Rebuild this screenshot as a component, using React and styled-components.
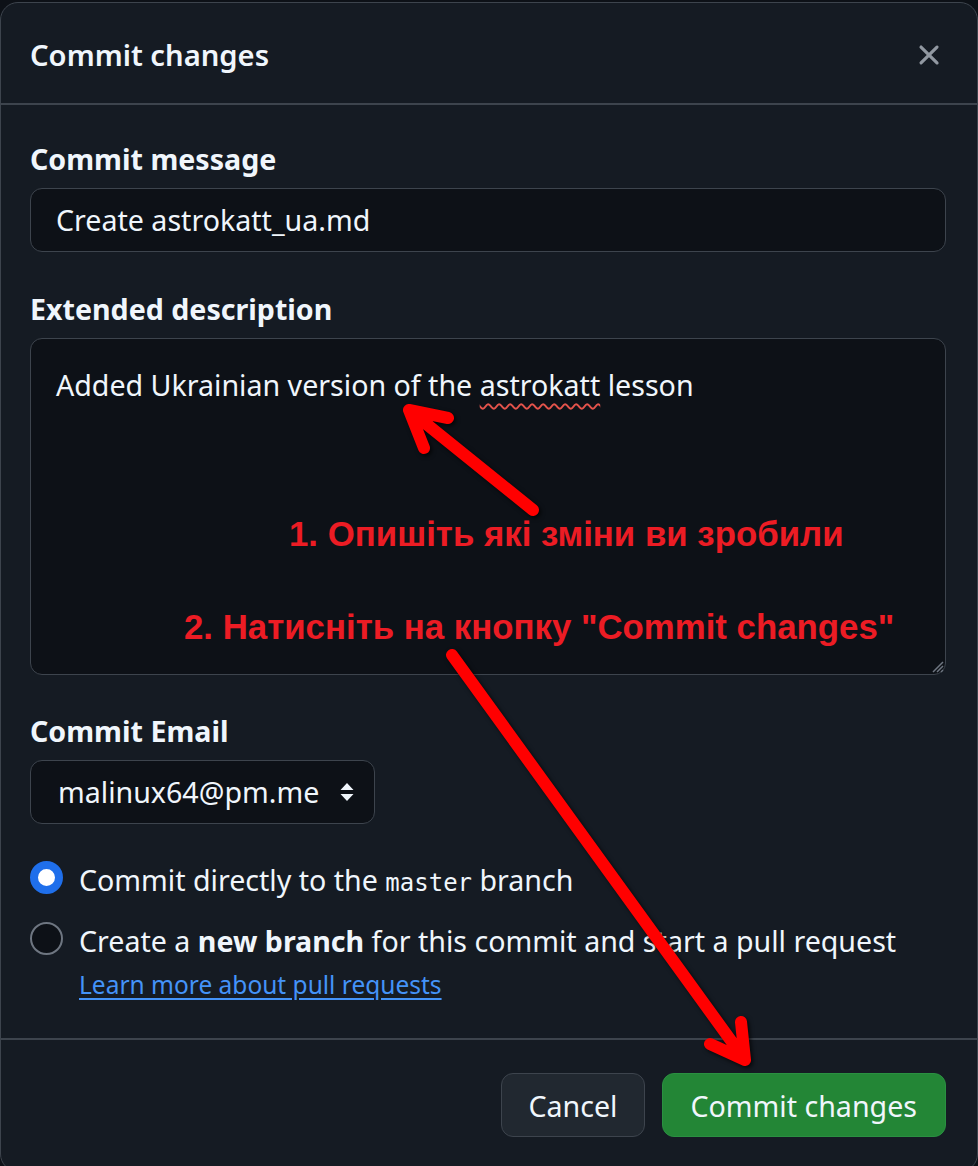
import styled, { createGlobalStyle } from "styled-components";

const Global = createGlobalStyle`
  html, body {
    margin: 0;
    padding: 0;
    background: #0d1117;
  }
  body {
    font-family: "Noto Sans", "Liberation Sans", sans-serif;
    color: #f0f6fc;
  }
  * {
    box-sizing: border-box;
  }
`;

const Page = styled.div`
  position: relative;
  width: 978px;
  height: 1166px;
  overflow: hidden;
  padding-top: 2px;
`;

const Dialog = styled.div`
  width: 978px;
  height: 1170px;
  background: #151b23;
  border: 1px solid #3d444d;
  border-radius: 18px;
  display: flex;
  flex-direction: column;
`;

const Header = styled.div`
  display: flex;
  align-items: center;
  justify-content: space-between;
  height: 102px;
  padding: 3px 31px 0 29px;
  border-bottom: 2px solid #3d444d;
`;

const Title = styled.h1`
  margin: 0;
  font-size: 29.2px;
  font-weight: 600;
  line-height: 40px;
`;

const Close = styled.button`
  background: none;
  border: none;
  padding: 0;
  display: flex;
  color: #9198a1;
`;

const Body = styled.div`
  padding: 34px 31px 35px 29px;
  display: flex;
  flex-direction: column;
`;

const Label = styled.div`
  font-size: 28.6px;
  font-weight: 700;
  line-height: 40px;
  margin-top: ${(p) => p.$top || 0}px;
  margin-bottom: 9px;
`;

const Field = styled.div`
  position: relative;
  background: #0d1117;
  border: 1px solid #3d444d;
  border-radius: 12px;
  font-size: 28.6px;
  line-height: 40px;
  width: ${(p) => p.$width || "100%"};
  height: ${(p) => p.$height}px;
  padding: ${(p) => p.$pad};
`;

const Misspelled = styled.span`
  text-decoration-line: underline;
  text-decoration-style: wavy;
  text-decoration-color: #e5534b;
  text-decoration-thickness: 1.6px;
  text-underline-offset: 7px;
`;

const Grip = styled.svg`
  position: absolute;
  right: 1px;
  bottom: 1px;
`;

const SelectRow = styled.div`
  display: flex;
  align-items: center;
  justify-content: space-between;
`;

const RadioRow = styled.div`
  display: flex;
  align-items: flex-start;
  gap: 16px;
  margin-top: ${(p) => p.$top}px;
`;

const Radio = styled.span`
  flex: none;
  width: 33px;
  height: 33px;
  margin-top: 1px;
  border-radius: 50%;
  background: ${(p) => (p.$on ? "#fff" : "#0d1117")};
  border: ${(p) => (p.$on ? "8px solid #1f6feb" : "2px solid #6e7681")};
`;

const RadioText = styled.div`
  font-size: 28.6px;
  line-height: 40px;
  font-weight: 400;
`;

const Mono = styled.code`
  font-family: "DejaVu Sans Mono", "Liberation Mono", monospace;
  font-size: 24px;
`;

const Link = styled.a`
  display: block;
  font-size: 24.5px;
  line-height: 36px;
  margin-top: 6px;
  color: #4493f8;
  text-decoration: underline;
  text-underline-offset: 4px;
`;

const Footer = styled.div`
  border-top: 2px solid #3d444d;
  display: flex;
  justify-content: flex-end;
  gap: 17px;
  padding: 33px 31px;
`;

const Button = styled.button`
  height: 64px;
  padding: 0 ${(p) => (p.$primary ? 28 : 26)}px;
  border-radius: 12px;
  font-family: "Noto Sans", sans-serif;
  font-size: 28.6px;
  color: #f0f6fc;
  background: ${(p) => (p.$primary ? "#238636" : "#212830")};
  border: 1px solid ${(p) => (p.$primary ? "#2a9041" : "#3d444d")};
`;

const Note = styled.div`
  position: absolute;
  left: ${(p) => p.$x}px;
  top: ${(p) => p.$y}px;
  font-family: "Liberation Sans", Arial, sans-serif;
  font-weight: 700;
  font-size: 34.8px;
  line-height: 40px;
  color: #ec1c24;
  white-space: nowrap;
`;

const Arrows = styled.svg`
  position: absolute;
  left: 0;
  top: 0;
  pointer-events: none;
  filter: drop-shadow(2px 2px 2px rgba(0, 0, 0, 0.7));
`;

export default function App() {
  return (
    <Page>
      <Global />
      <Dialog>
        <Header>
          <Title>Commit changes</Title>
          <Close aria-label="Close">
            <svg width="34" height="34" viewBox="0 0 16 16" fill="currentColor">
              <path d="M3.72 3.72a.75.75 0 0 1 1.06 0L8 6.94l3.22-3.22a.749.749 0 0 1 1.275.326.749.749 0 0 1-.215.734L9.06 8l3.22 3.22a.749.749 0 0 1-.326 1.275.749.749 0 0 1-.734-.215L8 9.06l-3.220 3.22a.751.751 0 0 1-1.042-.018.751.751 0 0 1-.018-1.042L6.94 8 3.72 4.78a.75.75 0 0 1 0-1.06Z" />
            </svg>
          </Close>
        </Header>

        <Body>
          <Label>Commit message</Label>
          <Field $height={64} $pad="11px 25px">
            Create astrokatt_ua.md
          </Field>

          <Label $top={37}>Extended description</Label>
          <Field $height={337} $pad="26px 25px">
            Added Ukrainian version of the <Misspelled>astrokatt</Misspelled> lesson
            <Grip width="16" height="16" viewBox="0 0 16 16">
              <path d="M15 5 L5 15 M15 9 L9 15 M15 13 L13 15" stroke="#6e7681" strokeWidth="1.5" />
            </Grip>
          </Field>

          <Label $top={36}>Commit Email</Label>
          <Field $width="345px" $height={64} $pad="11px 19px 11px 27px">
            <SelectRow>
              <span>malinux64@pm.me</span>
              <svg width="16" height="20" viewBox="0 0 16 20" fill="#f0f6fc">
                <path d="M8 1 L14.5 8 L1.5 8 Z M8 19 L1.5 12 L14.5 12 Z" />
              </svg>
            </SelectRow>
          </Field>

          <RadioRow $top={36}>
            <Radio $on />
            <RadioText>
              Commit directly to the <Mono>master</Mono> branch
            </RadioText>
          </RadioRow>
          <RadioRow $top={18}>
            <Radio />
            <RadioText>
              Create a <b>new branch</b> for this commit and start a pull request
              <Link href="#">Learn more about pull requests</Link>
            </RadioText>
          </RadioRow>
        </Body>

        <Footer>
          <Button>Cancel</Button>
          <Button $primary>Commit changes</Button>
        </Footer>
      </Dialog>

      <Note $x={289} $y={514}>1. Опишіть які зміни ви зробили</Note>
      <Note $x={184} $y={607}>2. Натисніть на кнопку "Commit changes"</Note>

      <Arrows width="978" height="1166" viewBox="0 0 978 1166">
        <g fill="none" stroke="#ff0000" strokeWidth="12" strokeLinecap="round" strokeLinejoin="round">
          <path d="M533 510 L409 410 M409 410 L448 418 M409 410 L424 448" />
          <path d="M452 655 L745 1060 M745 1060 L710 1044 M745 1060 L741 1022" />
        </g>
      </Arrows>
    </Page>
  );
}
